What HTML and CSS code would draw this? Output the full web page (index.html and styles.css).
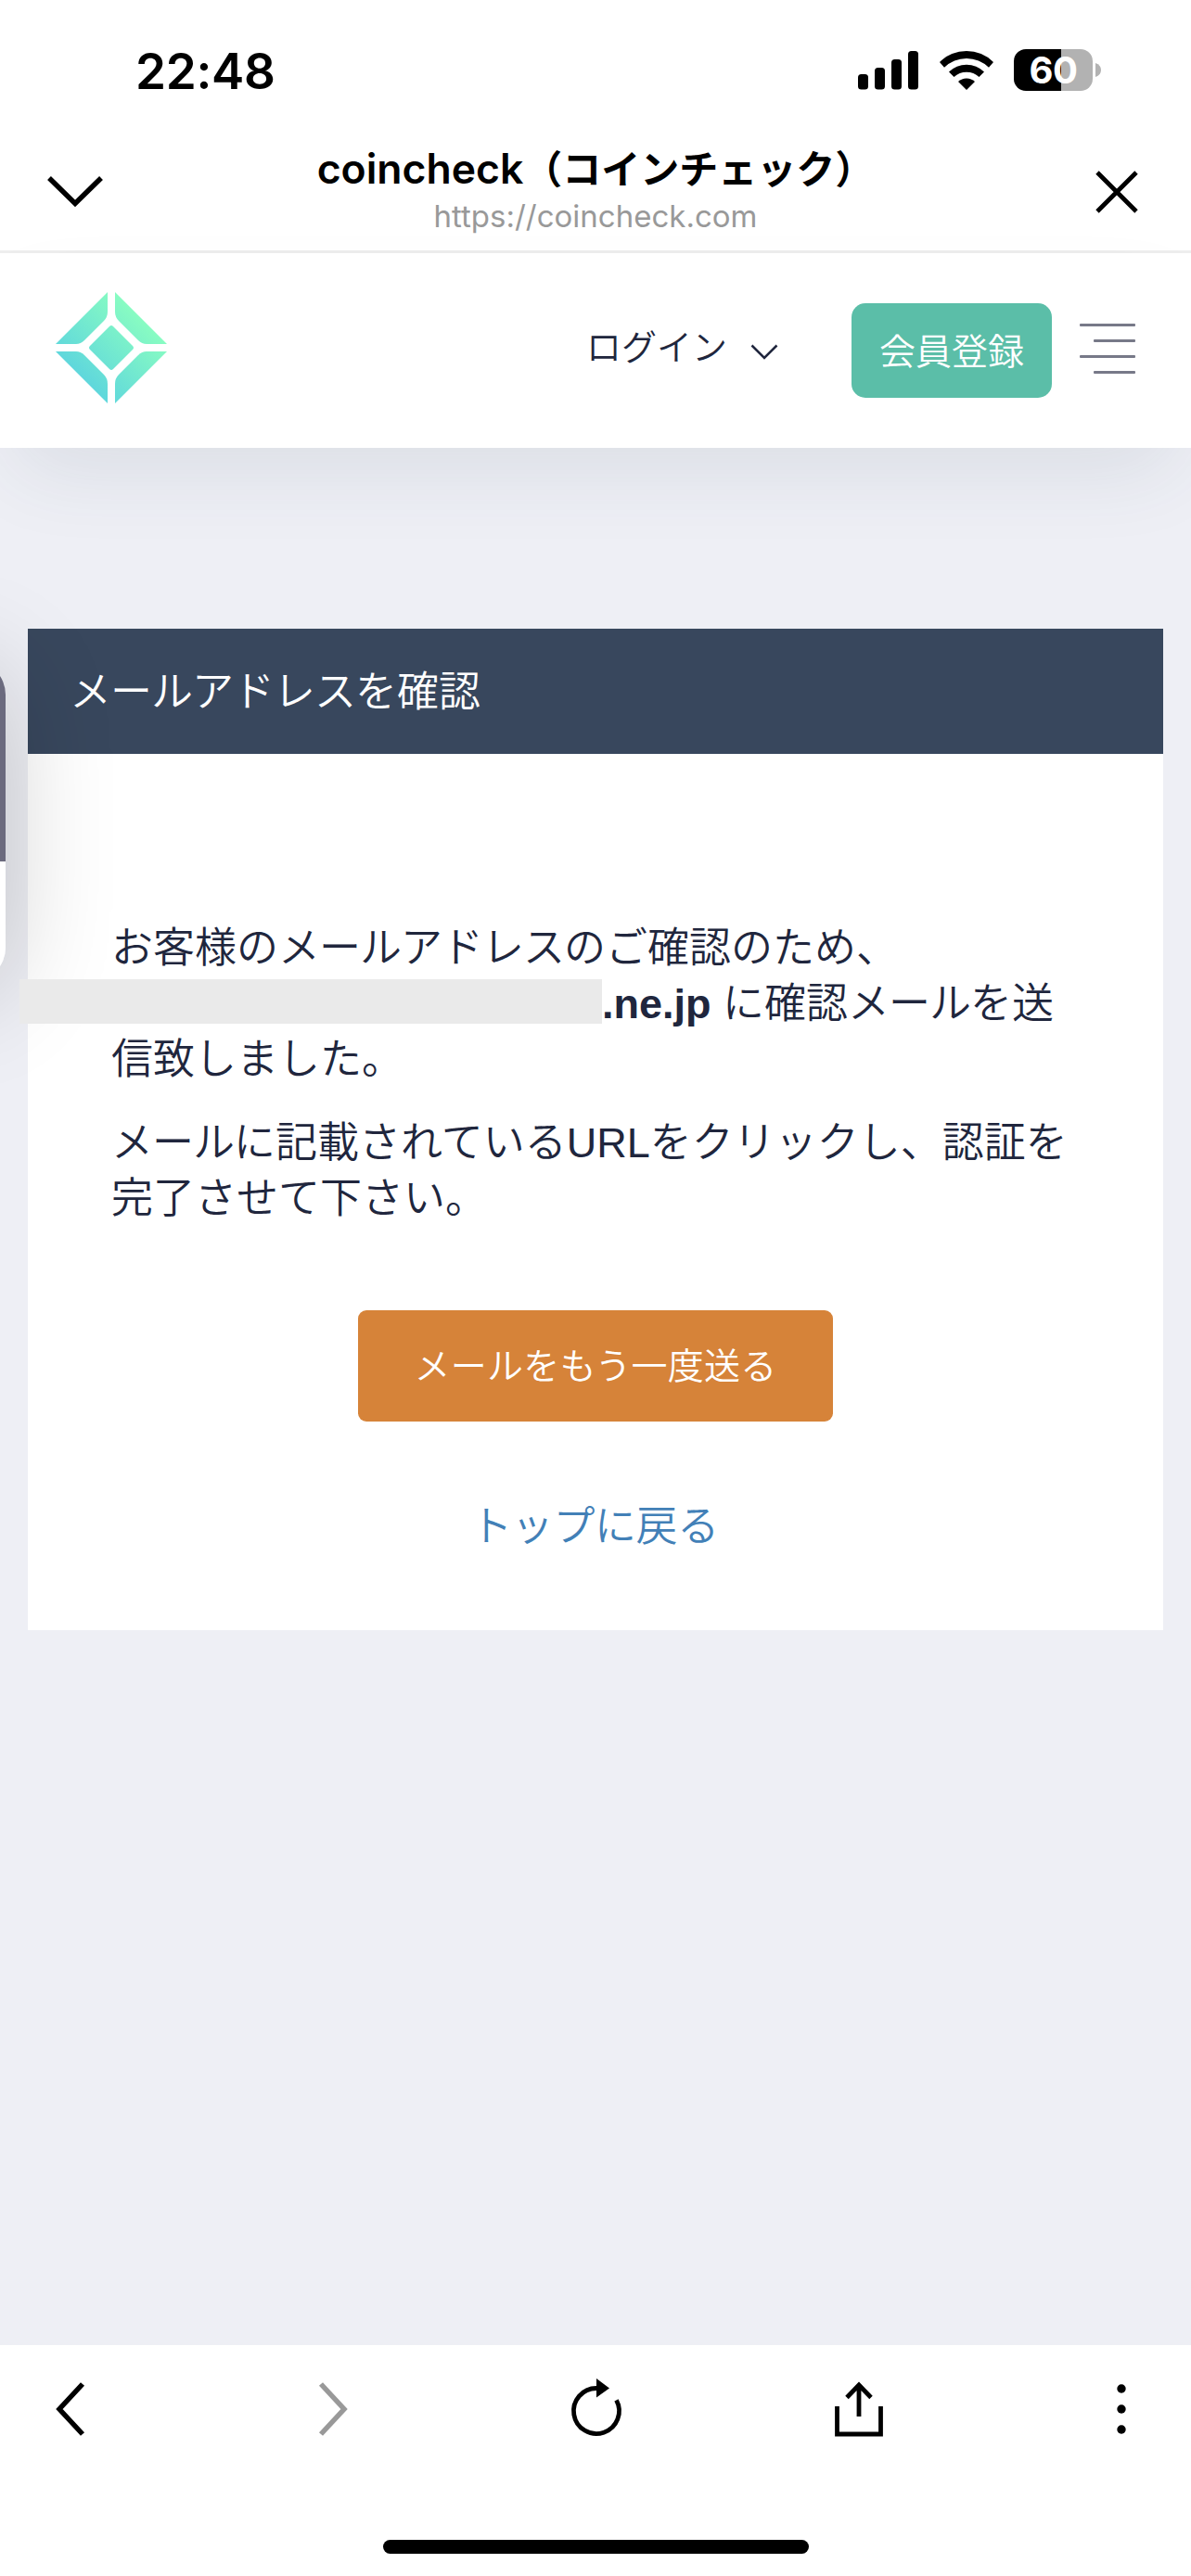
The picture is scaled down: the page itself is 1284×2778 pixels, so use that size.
FILE: index.html
```html
<!DOCTYPE html>
<html lang="ja">
<head>
<meta charset="utf-8">
<title>coincheck</title>
<link rel="stylesheet" href="styles.css">
</head>
<body>
<div class="screen">
  <div class="status-bar">
    <span class="clock">22:48</span>
    <div class="status-icons">
      <svg width="65" height="42" viewBox="0 0 65 42"><rect x="0" y="25" width="11" height="16.500" rx="3.500"/><rect x="18" y="18" width="11" height="23.500" rx="3.500"/><rect x="36" y="9" width="11" height="32.500" rx="3.500"/><rect x="54" y="0" width="11" height="41.500" rx="3.500"/></svg>
      <svg class="wifi" width="58" height="43" viewBox="0 0 58 43"><path d="M0 13A41 41 0 0 1 58 13L53 18.800A34 34 0 0 0 5 18.800Z"/><path d="M10 23.500A27 27 0 0 1 48 23.500L42.500 29A20 20 0 0 0 15.500 29Z"/><path d="M20 34A13 13 0 0 1 38 34L29 43Z"/></svg>
      <div class="battery"><span>60</span></div>
      <svg width="6" height="15" viewBox="0 0 6 15"><path d="M0 0Q6 2 6 7.500Q6 13 0 15Z" fill="#b2b2b2"/></svg>
    </div>
  </div>

  <div class="browser-bar">
    <svg width="62" height="34" viewBox="0 0 62 34"><path d="M3 3L31 30.500L59 3" class="line"/></svg>
    <div class="page-info">
      <div class="page-title"><span class="latin">coincheck</span>（コインチェック）</div>
      <div class="page-url">https://coincheck.com</div>
    </div>
    <svg width="46" height="46" viewBox="0 0 46 46"><path d="M2 2L44 44M44 2L2 44" class="line thin"/></svg>
  </div>

  <header class="site-header">
    <svg class="logo" width="120" height="120" viewBox="0 0 120 120">
      <defs><linearGradient id="mint" gradientUnits="userSpaceOnUse" x1="28" y1="92" x2="92" y2="28"><stop offset="0" stop-color="#5fd7dc"/><stop offset="1" stop-color="#88fcc2"/></linearGradient></defs>
      <g fill="url(#mint)">
        <path d="M56 0V21Q56 27 52 31L31 52Q27 56 22 56H0Z"/>
        <path d="M64 0V21Q64 27 68 31L89 52Q93 56 98 56H120Z"/>
        <path d="M56 120V99Q56 93 52 89L31 68Q27 64 22 64H0Z"/>
        <path d="M64 120V99Q64 93 68 89L89 68Q93 64 98 64H120Z"/>
        <path d="M58 37Q60 35 62 37L83 58Q85 60 83 62L62 83Q60 85 58 83L37 62Q35 60 37 58Z"/>
      </g>
    </svg>
    <div class="login">ログイン<svg width="30" height="17" viewBox="0 0 30 17"><path d="M1.500 1.500L15 15L28.500 1.500" fill="none" stroke="#20263d" stroke-width="2.500"/></svg></div>
    <div class="signup">会員登録</div>
    <div class="menu"><i></i><i class="short"></i><i></i><i class="short"></i></div>
  </header>

  <main class="content">
    <section class="card">
      <h1 class="card-title"><span class="tight">メールアドレス</span>を確認</h1>
      <div class="card-body">
        <p>お客様の<span class="tight">メールアドレス</span>のご確認のため、<br><span class="redacted"></span><b>.ne.jp</b> に確認<span class="tight">メール</span>を送<br>信致しました。</p>
        <p><span class="tight">メール</span>に記載されているURLをクリックし、認証を<br>完了させて下さい。</p>
        <div class="resend">メールをもう一度送る</div>
        <a class="back">トップに戻る</a>
      </div>
    </section>
    <div class="floating"></div>
  </main>

  <nav class="toolbar">
    <div class="tools">
      <svg width="56" height="60" viewBox="0 0 32 60"><path d="M29 3L4 30L29 57" class="line"/></svg>
      <svg width="56" height="60" viewBox="0 0 32 60"><path d="M3 3L28 30L3 57" class="line muted"/></svg>
      <svg width="56" height="60" viewBox="0 0 56 60"><path d="M28 7.500A24.500 24.500 0 1 0 49.500 20.300" class="line thin"/><path d="M28 -3L42 7.500L28 17.500Z"/></svg>
      <svg width="56" height="60" viewBox="0 0 52 60"><path d="M2.500 27V57H49.500V27M26 38V4M13 17.500L26 4L39 17.500" class="line thin"/></svg>
      <svg width="56" height="60" viewBox="0 0 10 60"><circle cx="5" cy="8" r="4.700"/><circle cx="5" cy="30" r="4.700"/><circle cx="5" cy="52" r="4.700"/></svg>
    </div>
    <div class="home-indicator"></div>
  </nav>
</div>
</body>
</html>
```
FILE: styles.css
```css
* { box-sizing: border-box; }

body {
  margin: 0;
  background: #fff;
  color: #20263d;
  font-family: "Liberation Sans", "Noto Sans CJK JP", sans-serif;
  font-weight: 350;
}

svg { display: block; flex: none; overflow: visible; }

.screen {
  width: 1284px;
  height: 2778px;
  display: flex;
  flex-direction: column;
  overflow: hidden;
}

.line { fill: none; stroke: #000; stroke-width: 5.5; }
.thin { stroke-width: 4.8; }
.muted { stroke: #999; }

.status-bar {
  height: 150px;
  padding: 0 97px 0 146px;
  display: flex;
  justify-content: space-between;
  color: #000;
  font-family: Inter, sans-serif;
}

.clock {
  font-size: 53px;
  font-weight: 600;
  line-height: 154px;
  letter-spacing: -.3px;
}

.status-icons {
  display: flex;
  align-items: center;
  height: 151px;
}

.wifi { margin: 0 22px 0 23px; }

.battery {
  width: 85px;
  height: 45px;
  margin-right: 3px;
  border-radius: 13px;
  background: linear-gradient(90deg, #000 51px, #b2b2b2 51px);
  color: #fff;
  font-size: 40px;
  font-weight: 700;
  line-height: 46px;
  text-align: center;
  letter-spacing: -.5px;
}

.browser-bar {
  height: 123px;
  padding: 0 57px 0 50px;
  border-bottom: 3px solid #eee;
  display: flex;
  justify-content: space-between;
  align-items: flex-start;
}

.browser-bar > svg:first-child { margin-top: 39px; }
.browser-bar > svg:last-child { margin: 34px 0 0 9px; }

.page-info { text-align: center; white-space: nowrap; }

.page-title {
  color: #000;
  font: 600 42px/64px Inter, "Noto Sans CJK JP", sans-serif;
}

.latin { font-size: 44.5px; }

.page-url {
  color: #999;
  font: 400 33px/36px Inter, sans-serif;
}

.site-header {
  height: 210px;
  flex: none;
  padding: 0 60px;
  display: flex;
  align-items: flex-start;
  position: relative;
  background: #fff;
  box-shadow: 0 40px 90px -20px rgba(50, 75, 95, .11);
}

.logo { margin-top: 42px; }

.login {
  display: flex;
  align-items: center;
  gap: 25px;
  margin: 74px 79px 0 auto;
  font-size: 38px;
  line-height: 56px;
}

.login svg { margin-top: 8px; }

.signup {
  width: 216px;
  height: 102px;
  margin: 54px 30px 0 0;
  border-radius: 15px;
  background: #5bbea8;
  color: #fff;
  font-size: 39px;
  line-height: 105px;
  text-align: center;
}

.menu {
  width: 60px;
  margin-top: 76px;
  display: flex;
  flex-direction: column;
  align-items: flex-end;
  gap: 14px;
}

.menu i { width: 60px; height: 3px; border-radius: 1px; background: #777988; }
.menu .short { width: 45px; }

.content {
  height: 2046px;
  flex: none;
  padding: 195px 30px 0;
  background: #eeeff5;
}

.card { height: 1080px; background: #fff; }

.card-title {
  height: 135px;
  margin: 0;
  padding-left: 45px;
  background: #38475d;
  color: #fff;
  font-size: 45px;
  font-weight: 350;
  line-height: 137px;
}

.card-body {
  padding: 180px 90px 0;
  display: flex;
  flex-direction: column;
  font-size: 45px;
  line-height: 60px;
  white-space: nowrap;
}

.card-body p { height: 180px; margin: 0 0 30px; }
.card-body p + p { height: 120px; margin-bottom: 90px; }

.tight { letter-spacing: -1px; }

.redacted {
  display: inline-block;
  position: relative;
  z-index: 2;
  width: 628px;
  height: 48px;
  margin: 3px 0 0 -99px;
  vertical-align: top;
  background: #eaeaea;
}

.resend {
  align-self: center;
  width: 512px;
  height: 120px;
  border-radius: 9px;
  background: #d68339;
  color: #fff;
  font-size: 39px;
  letter-spacing: .2px;
  line-height: 122px;
  text-align: center;
}

.back { align-self: center; margin: 84px 2px 0 0; color: #4280b7; letter-spacing: -.4px; }

/* Side panel peeking in from the left edge */
.floating {
  position: absolute;
  z-index: 1;
  left: -194px;
  top: 713px;
  width: 200px;
  height: 345px;
  border-radius: 36px;
  background: linear-gradient(#6b6a7e 216px, #fff 216px);
  box-shadow: 0 10px 120px rgba(0, 0, 0, .2);
}

.toolbar {
  height: 249px;
  padding: 39px 47px 0 48px;
  position: relative;
  z-index: 2;
  background: #fff;
}

.tools {
  height: 60px;
  display: flex;
  justify-content: space-between;
  align-items: center;
}

.home-indicator {
  width: 459px;
  height: 15px;
  margin: 111px 0 0 365px;
  border-radius: 8px;
  background: #000;
}
```
